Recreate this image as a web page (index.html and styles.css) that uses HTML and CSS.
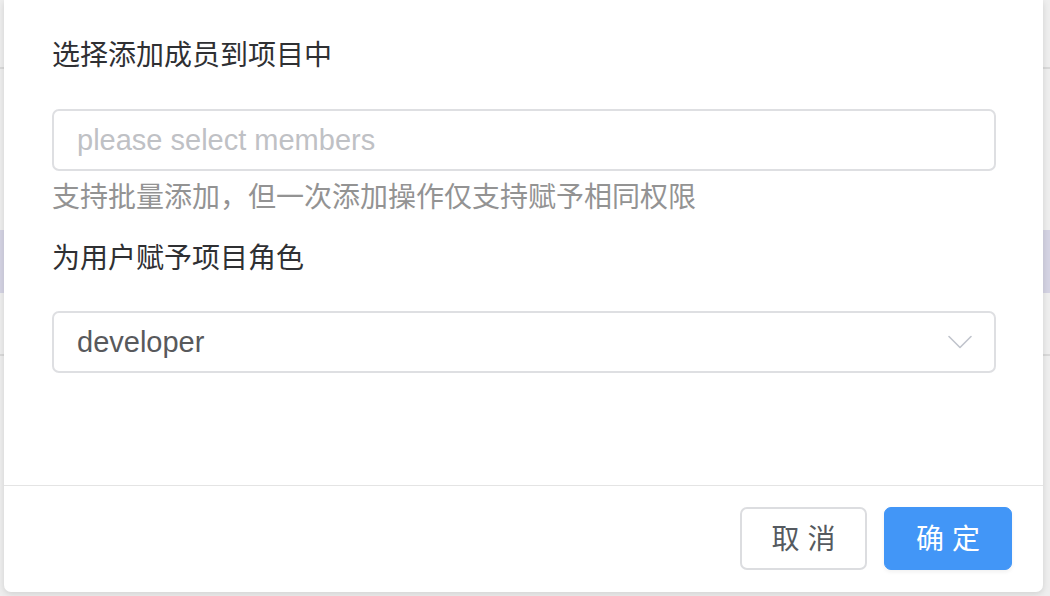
FILE: index.html
```html
<!DOCTYPE html>
<html lang="zh-CN">
<head>
<meta charset="utf-8">
<title>添加成员</title>
<link rel="stylesheet" href="styles.css">
</head>
<body>
<div class="page">
  <div class="backdrop">
    <div class="bg-head"></div>
    <div class="bg-gap"></div>
    <div class="bg-row-active"><span class="bg-dots">⋮</span></div>
    <div class="bg-row"></div>
  </div>

  <div class="modal">
    <div class="modal-body">
      <div class="field-label">选择添加成员到项目中</div>
      <div class="input">
        <span class="placeholder">please select members</span>
      </div>
      <div class="hint">支持批量添加，但一次添加操作仅支持赋予相同权限</div>
      <div class="field-label label-second">为用户赋予项目角色</div>
      <div class="input select">
        <span class="value">developer</span>
        <svg class="chevron" width="24" height="14" viewBox="0 0 24 14" aria-hidden="true">
          <path d="M1 1.5 L12 12.5 L23 1.5" fill="none" stroke="#c0c4cc" stroke-width="1.6" stroke-linecap="round" stroke-linejoin="round"/>
        </svg>
      </div>
    </div>
    <div class="modal-footer">
      <button class="btn btn-default">取 消</button>
      <button class="btn btn-primary">确 定</button>
    </div>
  </div>
</div>
</body>
</html>
```

FILE: styles.css
```css
* {
  box-sizing: border-box;
}

html, body {
  margin: 0;
  padding: 0;
}

body {
  font-family: "Liberation Sans", "Noto Sans CJK SC", sans-serif;
  background: #ececec;
}

.page {
  position: relative;
  width: 1050px;
  height: 596px;
  overflow: hidden;
  background: #eeeeee;
}

.backdrop {
  display: flex;
  flex-direction: column;
}

.bg-head {
  height: 69px;
  border-bottom: 2px solid #d9d9d9;
}

.bg-gap {
  height: 161px;
}

.bg-row-active {
  height: 63px;
  background: #d4d3e3;
  display: flex;
  justify-content: flex-end;
  align-items: center;
  padding-right: 2px;
  color: #444;
  font-size: 16px;
}

.bg-row {
  height: 63px;
  border-bottom: 2px solid #d9d9d9;
}

.modal {
  position: absolute;
  left: 4px;
  top: 0;
  width: 1039px;
  height: 592px;
  background: #ffffff;
  border-radius: 0 0 7px 7px;
  box-shadow: 0 2px 6px rgba(0, 0, 0, 0.12);
  display: flex;
  flex-direction: column;
}

.modal-body {
  height: 486px;
  padding: 36px 47px 0 48px;
  border-bottom: 1.5px solid #e4e4e4;
}

.field-label {
  font-size: 28px;
  line-height: 40px;
  color: #2f3033;
}

.label-second {
  margin-top: 22px;
}

.input {
  margin-top: 33px;
  height: 62px;
  border: 2px solid #dedfe2;
  border-radius: 7px;
  display: flex;
  align-items: center;
  padding: 0 22px 0 23px;
  font-size: 29px;
}

.placeholder {
  color: #bfc1c5;
}

.hint {
  margin-top: 7px;
  font-size: 28px;
  line-height: 40px;
  color: #939393;
}

.label-second {
  margin-top: 21px;
}

.select {
  margin-top: 32px;
  justify-content: space-between;
}

.value {
  color: #58595c;
}

.chevron {
  display: block;
}

.modal-footer {
  flex: 1;
  display: flex;
  justify-content: flex-end;
  align-items: flex-start;
  gap: 17px;
  padding: 21px 31px 0 0;
}

.btn {
  height: 63px;
  width: 127px;
  border-radius: 7px;
  font-family: "Liberation Sans", "Noto Sans CJK SC", sans-serif;
  font-size: 28px;
  line-height: 1;
  padding: 2px 0 0;
  cursor: pointer;
}

.btn-default {
  background: #ffffff;
  border: 2px solid #dcdde0;
  color: #555a60;
}

.btn-primary {
  width: 128px;
  background: #4296f7;
  border: 1px solid #4296f7;
  color: #ffffff;
  box-shadow: 0 2px 4px rgba(0, 0, 0, 0.06);
}
```
